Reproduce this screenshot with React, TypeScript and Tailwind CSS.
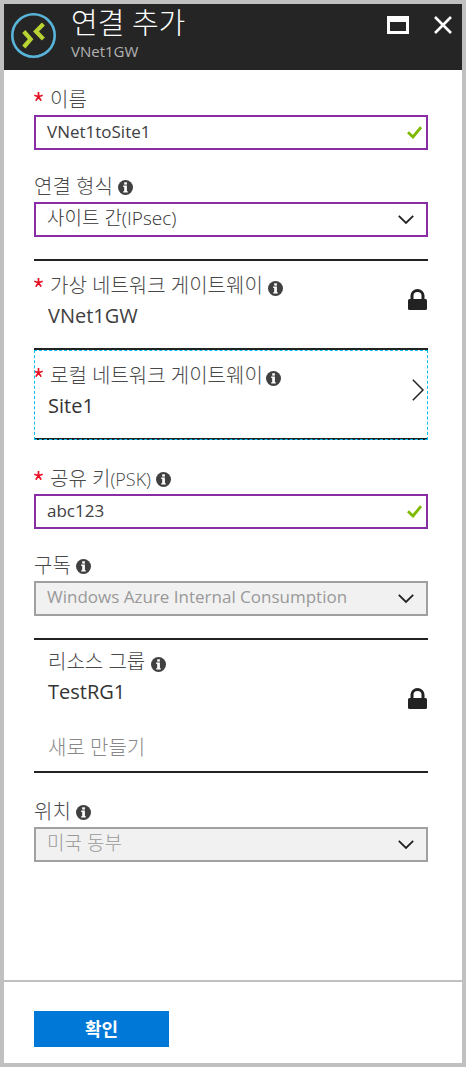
import { useState, type ReactNode } from "react";

const LABEL = "text-xl font-light text-[#484848]";

function InfoIcon() {
  return (
    <svg viewBox="0 0 15 15" className="size-[15px] shrink-0" aria-hidden="true">
      <circle cx="7.5" cy="7.5" r="7.5" fill="#404040" />
      <rect x="6.2" y="2.3" width="2.7" height="2.3" fill="#fff" />
      <path d="M5.2 5.6H8.9V11.2H9.8V12.5H5.2V11.2H6.2V6.9H5.2Z" fill="#fff" />
    </svg>
  );
}

function LockIcon() {
  return (
    <svg viewBox="0 0 19 21" className="mr-px h-[21px] w-[19px] shrink-0" aria-hidden="true">
      <path d="M4 11V6.6a5.5 5.1 0 0 1 11 0V11" fill="none" stroke="#222" strokeWidth="3" />
      <rect x="0" y="10" width="19" height="11" rx="1.5" fill="#222" />
    </svg>
  );
}

function ChevronDown() {
  return (
    <svg viewBox="0 0 16 10" className="pointer-events-none absolute right-[14px] top-[13px] h-[10px] w-4" aria-hidden="true">
      <path d="M0.8 0.8L8 8L15.2 0.8" fill="none" stroke="#222" strokeWidth="1.8" />
    </svg>
  );
}

function CheckIcon() {
  return (
    <svg viewBox="0 0 15 13" className="pointer-events-none absolute right-[6px] top-[11px] h-[13px] w-[15px]" aria-hidden="true">
      <path d="M1 6.2L6 11L14 1.2" fill="none" stroke="#7fba00" strokeWidth="2.8" />
    </svg>
  );
}

function Star() {
  return (
    <svg viewBox="0 0 9 9" className="-mt-2 mr-[7px] size-[9px] shrink-0" aria-label="필수" role="img">
      <path d="M4.5 4.7V0M4.5 4.7L0.3 3.3M4.5 4.7L8.7 3.3M4.5 4.7L1.8 8.7M4.5 4.7L7.2 8.7" stroke="#e81123" strokeWidth="1.7" />
    </svg>
  );
}

function FieldLabel({ htmlFor, required, info, children }: { htmlFor: string; required?: boolean; info?: boolean; children: ReactNode }) {
  return (
    <div className="flex h-[30px] items-center">
      {required && <Star />}
      <label htmlFor={htmlFor} className={LABEL}>{children}</label>
      {info && <span className="ml-[5px]"><InfoIcon /></span>}
    </div>
  );
}

function TextField({ id, label, initial, info }: { id: string; label: ReactNode; initial: string; info?: boolean }) {
  const [value, setValue] = useState(initial);
  return (
    <div>
      <FieldLabel htmlFor={id} required info={info}>{label}</FieldLabel>
      <div className="relative">
        <input
          id={id}
          value={value}
          onChange={(e) => setValue(e.target.value)}
          className="block h-[35px] w-full border-2 border-[#8a2da5] bg-white pb-[3px] pl-[11px] pr-8 text-[17px] text-[#404040] outline-none"
        />
        <CheckIcon />
      </div>
    </div>
  );
}

function SelectField({ id, label, option, disabled, textClass = "text-[19px] font-light" }: { id: string; label: string; option: string; disabled?: boolean; textClass?: string }) {
  return (
    <div>
      <FieldLabel htmlFor={id} info>{label}</FieldLabel>
      <div className="relative">
        <select
          id={id}
          disabled={disabled}
          className={`block h-[35px] w-full appearance-none border-2 border-[#8a2da5] bg-white pb-[3px] pl-[11px] pr-9 text-[#333] opacity-100 outline-none disabled:border-[#a0a0a0] disabled:bg-[#f1f1f1] disabled:text-[#999] ${textClass}`}
        >
          <option>{option}</option>
        </select>
        <ChevronDown />
      </div>
    </div>
  );
}

export default function App() {
  return (
    <main
      lang="ko"
      className="flex min-h-screen flex-col border-4 border-[#c0c0c0] bg-white font-['Open_Sans','Noto_Sans_CJK_KR',sans-serif]"
    >
      <header className="flex h-[66px] items-start bg-[#252525] text-white">
        <svg viewBox="0 0 45 45" className="ml-[7px] mt-[9px] size-[45px] shrink-0" aria-hidden="true">
          <circle cx="22.5" cy="22.5" r="21.2" fill="none" stroke="#59b4d9" strokeWidth="2.6" />
          <path d="M12.8 18.5L19.6 26.2L12.8 34" fill="none" stroke="#b8d432" strokeWidth="4.2" />
          <path d="M32.4 11L25 18.4L32.4 26" fill="none" stroke="#b8d432" strokeWidth="4.2" />
        </svg>
        <div className="ml-[15px] grow">
          <h1 className="text-[29px] font-light leading-[38px]">연결 추가</h1>
          <p className="text-[15px] leading-[18px] text-[#b3b3b3]">VNet1GW</p>
        </div>
        <button type="button" aria-label="최대화" className="mt-3 mr-[25px]">
          <svg viewBox="0 0 22 18" className="block h-[18px] w-[22px]">
            <path d="M0 0H22V18H0ZM3 6V15H19V6Z" fill="#fff" fillRule="evenodd" />
          </svg>
        </button>
        <button type="button" aria-label="닫기" className="mt-3 mr-[10px]">
          <svg viewBox="0 0 18 18" className="block size-[18px]">
            <path d="M1 1L17 17M17 1L1 17" stroke="#fff" strokeWidth="2.6" />
          </svg>
        </button>
      </header>

      <form id="connection" className="grow pt-[15px] pl-[30px] pr-[34px]" onSubmit={(e) => e.preventDefault()}>
        <div className="flex flex-col gap-[22px]">
          <TextField id="name" label="이름" initial="VNet1toSite1" />
          <SelectField id="type" label="연결 형식" option="사이트 간(IPsec)" />

          <section className="border-y-2 border-[#222]">
            <div className="flex h-[87px] items-start">
              <div className="grow">
                <div className="mt-[10px] flex h-[30px] items-center">
                  <Star />
                  <span className={LABEL}>가상 네트워크 게이트웨이</span>
                  <span className="mt-1 ml-[5px]"><InfoIcon /></span>
                </div>
                <p className="pl-[14px] text-xl leading-[30px] text-[#404040]">VNet1GW</p>
              </div>
              <span className="mt-7"><LockIcon /></span>
            </div>
          </section>
        </div>

        <button type="button" className="relative flex h-[90px] w-full items-start border-b-2 border-[#222] text-left">
          <span className="pointer-events-none absolute inset-x-0 top-0 -bottom-[2px] border border-dashed border-[#00bcf2]" />
          <span className="grow">
            <span className="mt-[11px] flex h-[30px] items-center">
              <Star />
              <span className={LABEL}>로컬 네트워크 게이트웨이</span>
              <span className="mt-1 ml-[3px]"><InfoIcon /></span>
            </span>
            <span className="block pl-[14px] text-xl leading-[30px] text-[#333]">Site1</span>
          </span>
          <svg viewBox="0 0 12 22" className="mt-[29px] mr-1 h-[22px] w-3" aria-hidden="true">
            <path d="M0.8 0.8L11 11L0.8 21.2" fill="none" stroke="#222" strokeWidth="1.5" />
          </svg>
        </button>

        <div className="mt-6 flex flex-col gap-[22px]">
          <TextField id="psk" label={<>공유 키<span className="text-lg">(PSK)</span></>} initial="abc123" info />
          <SelectField id="subscription" label="구독" option="Windows Azure Internal Consumption" disabled textClass="text-[17px]" />

          <section className="flex h-[135px] items-start border-y-2 border-[#222]">
            <div className="grow pl-[14px]">
              <div className="mt-[7px] flex h-[30px] items-center">
                <span className={LABEL}>리소스 그룹</span>
                <span className="mt-1 ml-[6px]"><InfoIcon /></span>
              </div>
              <p className="text-xl leading-[30px] text-[#333]">TestRG1</p>
              <button type="button" className="mt-[26px] block text-xl leading-[30px] font-light text-[#888]">새로 만들기</button>
            </div>
            <span className="mt-12"><LockIcon /></span>
          </section>
        </div>

        <div className="mt-6">
          <SelectField id="location" label="위치" option="미국 동부" disabled />
        </div>
      </form>

      <footer className="border-t-2 border-[#c0c0c0] pt-[29px] pb-4 pl-[30px]">
        <button type="submit" form="connection" className="block h-9 w-[135px] bg-[#0078d7] text-lg font-bold text-white">확인</button>
      </footer>
    </main>
  );
}
